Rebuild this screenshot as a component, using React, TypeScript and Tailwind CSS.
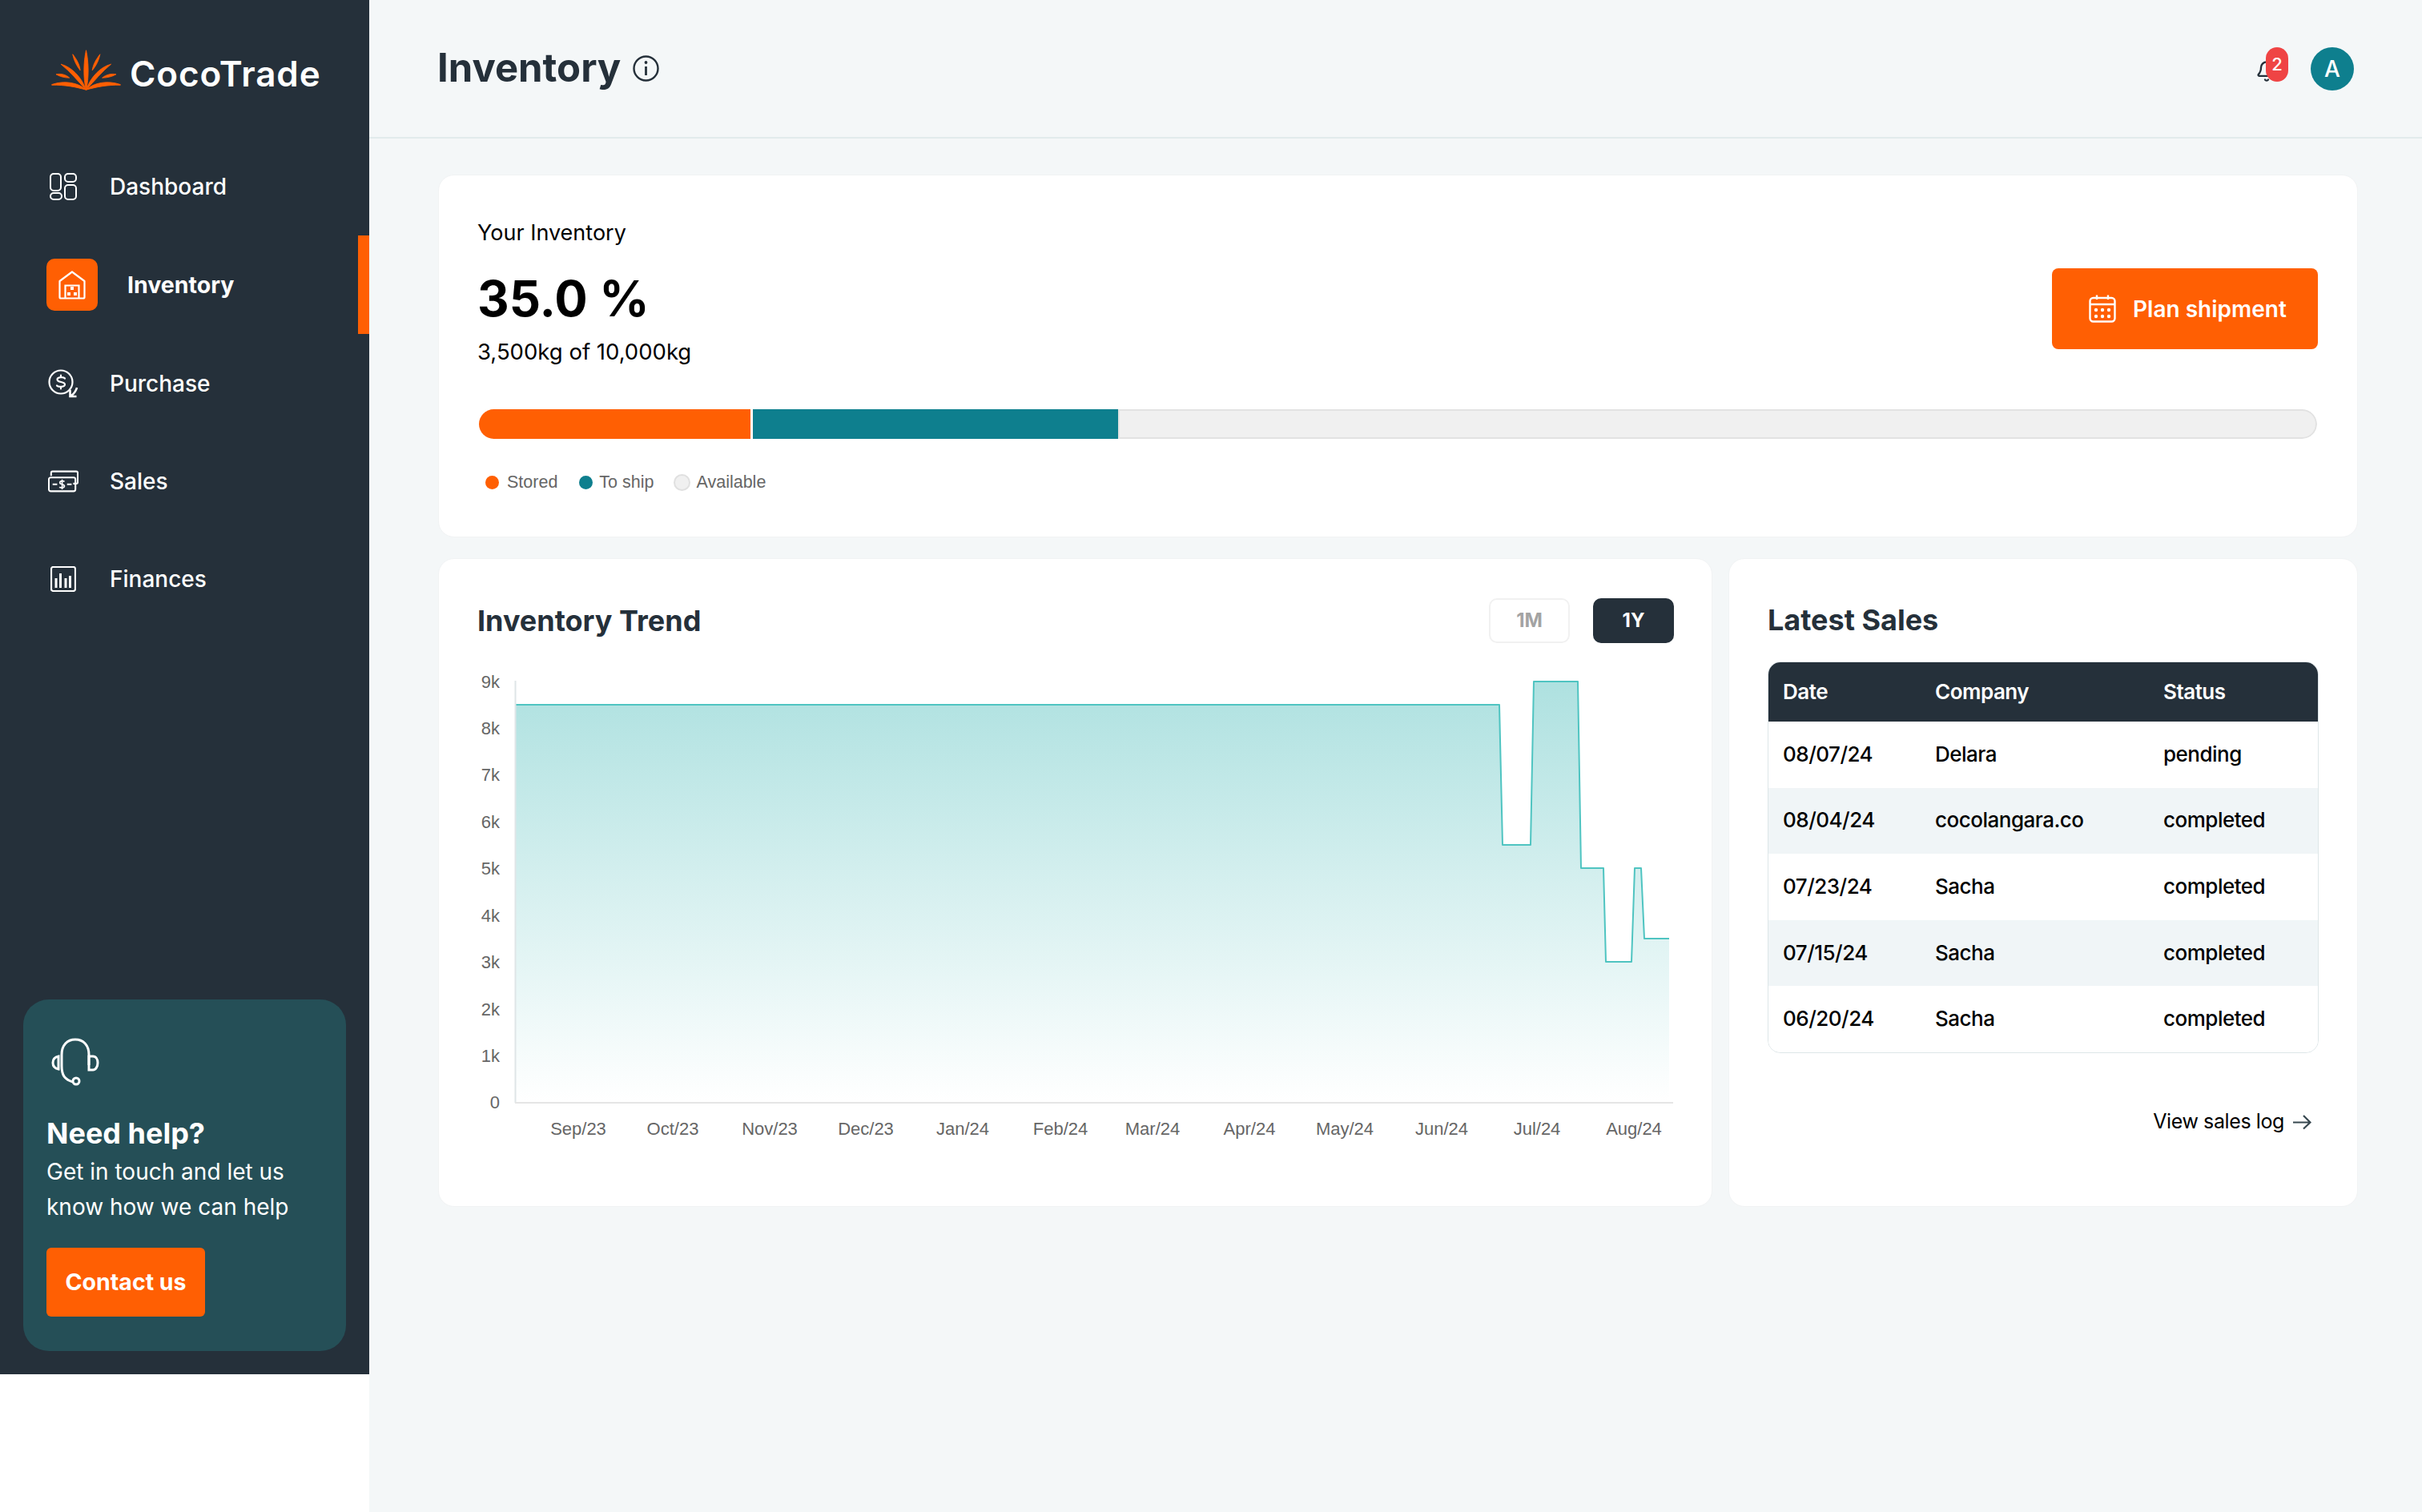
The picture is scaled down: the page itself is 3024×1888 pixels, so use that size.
import { Bell } from "lucide-react";

const I = "font-['Inter',sans-serif]";

function Logo() {
  return (
    <svg width="87" height="51" viewBox="190 183 260 152" fill="#ff5f03" stroke="#ff5f03" strokeWidth="2.5" strokeLinejoin="round" className="shrink-0">
      <path d="M320 333 C309 290 310 230 320 185 C330 230 331 290 320 333Z" />
      <path d="M270 200 C284 218 296 238 298 260 C285 244 274 222 270 200Z" />
      <path d="M372 200 C368 222 357 244 343 260 C346 238 358 218 372 200Z" />
      <path d="M226 237 C264 246 304 285 319 332 C290 300 260 264 226 237Z" />
      <path d="M413 237 C375 246 336 285 321 332 C350 300 380 264 413 237Z" />
      <path d="M208 275 C226 271 246 276 258 288 C240 288 224 284 208 275Z" />
      <path d="M432 275 C414 271 394 276 380 288 C398 288 416 284 432 275Z" />
      <path d="M192 313 C240 296 292 306 320 333 C282 322 240 314 192 315Z" />
      <path d="M448 313 C400 296 348 306 320 333 C358 322 400 314 448 315Z" />
    </svg>
  );
}

function DashIcon() {
  return (
    <svg width="34" height="34" viewBox="0 0 34 34" fill="none" stroke="white" strokeWidth="2">
      <rect x="1" y="1" width="13" height="21" rx="4" />
      <rect x="19" y="1" width="14" height="10" rx="4" />
      <rect x="1" y="25" width="14" height="8" rx="4" />
      <rect x="19" y="15" width="14" height="18" rx="4" />
    </svg>
  );
}

function HouseIcon() {
  return (
    <svg width="34" height="36" viewBox="0 0 34 36" fill="none" stroke="white" strokeWidth="2.2">
      <path d="M1.5 13 L17 1.5 L32.5 13 V33 Q32.5 34.5 31 34.5 H3 Q1.5 34.5 1.5 33Z" strokeLinejoin="round" />
      <path d="M8.5 34 V18.5 H25.5 V34" />
      <g fill="white" stroke="none">
        <rect x="15" y="20" width="4" height="4" />
        <rect x="11" y="27" width="4" height="4" />
        <rect x="19" y="27" width="4" height="4" />
      </g>
    </svg>
  );
}

function PurchaseIcon() {
  return (
    <svg width="38" height="36" viewBox="0 0 38 36" fill="none" stroke="white" strokeWidth="2.2">
      <circle cx="16" cy="16" r="14.5" />
      <path d="M21 11.5 C19.5 9.5 11.5 9.5 11.5 13 C11.5 17 21 15 21 19 C21 22.5 12.5 22.5 11 20.5 M16 7.5 V10 M16 22 V24.5" strokeLinecap="round" />
      <path d="M36 23 C35 27 33 30 29 33 M27.5 26 L27.5 34 L35.5 34" strokeWidth="2.6" />
    </svg>
  );
}

function SalesIcon() {
  return (
    <svg width="40" height="28" viewBox="0 0 40 28" fill="none" stroke="white" strokeWidth="2.2">
      <path d="M4 7 V3 Q4 1 6 1 H37 Q39 1 39 3 V15 Q39 17 37 17 H33" />
      <rect x="1" y="9" width="35" height="18" rx="2.5" />
      <path d="M6 18 H12 M25 18 H31" />
      <path d="M21.5 14.5 C20.5 13 15.5 13 15.5 15.8 C15.5 18.5 21.5 17.5 21.5 20.2 C21.5 22.8 16 22.8 15 21.5 M18.5 11.5 V24.5" strokeWidth="1.8" />
    </svg>
  );
}

function FinanceIcon() {
  return (
    <svg width="32" height="32" viewBox="0 0 32 32" fill="none" stroke="white" strokeWidth="2.2">
      <rect x="1" y="1" width="30" height="30" rx="2.5" />
      <path d="M7 27 V15 M12.5 27 V9 M19 27 V15 M24.5 27 V12" strokeWidth="3" />
    </svg>
  );
}

function HeadsetIcon() {
  return (
    <svg width="60" height="60" viewBox="0 0 60 60" fill="none" stroke="white" strokeWidth="3">
      <path d="M13 35 V21 C13 9 20 2 30 2 C40 2 47 9 47 21 V34" />
      <path d="M13 35 C13 47 17 52 27 55" />
      <path d="M9 23 C4 24 2 27 2 31 C2 35 4 38 9 39Z" />
      <path d="M47 23 H52 C56 23 58 27 58 31 C58 35 56 40 52 40 H47Z" />
      <circle cx="31" cy="54" r="4" />
    </svg>
  );
}

function CalendarIcon() {
  return (
    <svg width="34" height="35" viewBox="0 0 34 35" fill="none" stroke="white" strokeWidth="2.4">
      <rect x="1.5" y="4" width="31" height="29.5" rx="4" />
      <path d="M1.5 12 H32.5 M10 0.5 V6 M24 0.5 V6" />
      <g fill="white" stroke="none">
        <circle cx="9" cy="19" r="2.2" />
        <circle cx="17" cy="19" r="2.2" />
        <circle cx="25" cy="19" r="2.2" />
        <circle cx="9" cy="27" r="2.2" />
        <circle cx="17" cy="27" r="2.2" />
        <circle cx="25" cy="27" r="2.2" />
      </g>
    </svg>
  );
}

function InfoIcon() {
  return (
    <svg width="33" height="33" viewBox="0 0 33 33" fill="none" stroke="#25303a" strokeWidth="2.4">
      <circle cx="16.5" cy="16.5" r="15" />
      <path d="M16.5 14 V25" strokeWidth="2.8" />
      <circle cx="16.5" cy="9" r="1.9" fill="#25303a" stroke="none" />
    </svg>
  );
}

function LongArrow() {
  return (
    <svg width="24" height="20" viewBox="0 0 24 20" fill="none" stroke="#37474f" strokeWidth="2.2">
      <path d="M1 10.5 H22 M14 2 L22.5 10.5 L14 18.5" />
    </svg>
  );
}

const nav = [
  { label: "Dashboard", icon: <DashIcon /> },
  { label: "Inventory", icon: <HouseIcon />, active: true },
  { label: "Purchase", icon: <PurchaseIcon /> },
  { label: "Sales", icon: <SalesIcon /> },
  { label: "Finances", icon: <FinanceIcon /> },
];

function Sidebar() {
  return (
    <aside className="w-[461px] h-[1716px] shrink-0 bg-[#25303a] flex flex-col text-white">
      <div className="h-[172px] pl-[64px] pt-[62px] flex items-start gap-[11px]">
        <Logo />
        <span className="text-[44px] leading-[50px] font-semibold tracking-[0.9px] mt-[5px]">CocoTrade</span>
      </div>
      <nav className="flex flex-col">
        {nav.map((n) =>
          n.active ? (
            <div key={n.label} className="relative h-[123px] flex items-center pl-[58px]">
              <div className="w-[64px] h-[65px] rounded-[10px] bg-[#ff5f03] flex items-center justify-center">{n.icon}</div>
              <span className="ml-[37px] text-[28.5px] font-bold">{n.label}</span>
              <div className="absolute right-0 top-0 w-[14px] h-full bg-[#ff5f03]" />
            </div>
          ) : (
            <div key={n.label} className="h-[122.4px] flex items-center">
              <div className="w-[137px] pl-[60px] flex">
                <div className="w-[38px] flex justify-center">{n.icon}</div>
              </div>
              <span className="text-[28px] font-medium">{n.label}</span>
            </div>
          )
        )}
      </nav>
      <div className="mt-auto mb-[29px] mx-[29px] h-[439px] rounded-[32px] bg-[#254f57] pl-[29px] pt-[48px]">
        <div className="pl-[6px]"><HeadsetIcon /></div>
        <div className="text-[36px] leading-[48px] font-bold mt-[35px]">Need help?</div>
        <div className="text-[28px] leading-[44px] mt-[2px] whitespace-nowrap">Get in touch and let us<br />know how we can help</div>
        <button className="mt-[29px] w-[198px] h-[86px] rounded-[6px] bg-[#ff5f03] text-[28.5px] font-bold">Contact us</button>
      </div>
    </aside>
  );
}

const sales = [
  ["08/07/24", "Delara", "pending"],
  ["08/04/24", "cocolangara.co", "completed"],
  ["07/23/24", "Sacha", "completed"],
  ["07/15/24", "Sacha", "completed"],
  ["06/20/24", "Sacha", "completed"],
];

const yLabels = ["9k", "8k", "7k", "6k", "5k", "4k", "3k", "2k", "1k", "0"];
const xLabels: [string, number][] = [
  ["Sep/23", 722], ["Oct/23", 840], ["Nov/23", 961], ["Dec/23", 1081], ["Jan/24", 1202], ["Feb/24", 1324],
  ["Mar/24", 1439], ["Apr/24", 1560], ["May/24", 1679], ["Jun/24", 1800], ["Jul/24", 1919], ["Aug/24", 2040],
];

const line =
  "M644 880 H1872 L1876 1055 H1911 L1915 851 H1970 L1974 1084 H2002 L2005 1201 H2037 L2041 1084 H2049 L2053 1172 H2084";

function Chart() {
  return (
    <svg width="1590" height="640" viewBox="547 810 1590 640" className="block mt-[7px] -ml-px font-['Liberation_Sans',sans-serif]">
      <defs>
        <linearGradient id="fillArea" x1="0" y1="0" x2="0" y2="1">
          <stop offset="0" stopColor="#aee1e0" />
          <stop offset="1" stopColor="#ffffff" />
        </linearGradient>
      </defs>
      <path d={`${line} V1376 H644 Z`} fill="url(#fillArea)" />
      <path d={line} fill="none" stroke="#4fc4c1" strokeWidth="2" strokeLinejoin="round" />
      <path d="M643.5 850 V1377" stroke="#dfe5e7" strokeWidth="2" fill="none" />
      <path d="M643 1377 H2089" stroke="#e5e5e5" strokeWidth="2" fill="none" />
      {yLabels.map((l, i) => (
        <text key={l} x="624" y={850.5 + i * 58.44 + 8} textAnchor="end" fontSize="22" fill="#666666">{l}</text>
      ))}
      {xLabels.map(([l, x]) => (
        <text key={l} x={x} y="1417" textAnchor="middle" fontSize="22" fill="#666666">{l}</text>
      ))}
    </svg>
  );
}

export default function App() {
  return (
    <div className={`${I} flex w-[3024px] h-[1888px] bg-white overflow-hidden`}>
      <Sidebar />
      <main className="flex-1 h-full bg-[#f4f7f8] text-[#25303a]">
        <header className="h-[173px] border-b-2 border-[#e2ebec] pl-[85px] pr-[85px] flex justify-between items-start">
          <div className="flex items-center gap-[15px] mt-[54px]">
            <h1 className="text-[49px] leading-[62px] font-bold">Inventory</h1>
            <InfoIcon />
          </div>
          <div className="flex items-start gap-[28px] mt-[59px]">
            <div className="relative w-[38px] h-[43px]">
              <Bell size={28} strokeWidth={2} className="absolute left-[-3px] bottom-[-1px]" />
              <div className="absolute right-0 top-0 w-[28px] h-[43px] rounded-[14px] bg-[#ef4444] text-white text-[22px] leading-[43px] text-center font-medium pb-[4px]">2</div>
            </div>
            <div className="w-[54px] h-[54px] rounded-full bg-[#0e7f8e] text-white text-[28px] leading-[54px] text-center font-medium">A</div>
          </div>
        </header>

        <div className="pl-[86px] pr-[80px] pt-[45px] flex flex-col gap-[26px]">
          <section className="h-[453px] rounded-[20px] bg-white border border-[#f1f3f4] px-[48px] pt-[52px]">
            <div className="flex justify-between items-end">
              <div className="text-black">
                <div className="text-[27px] leading-[40px]">Your Inventory</div>
                <div className="text-[61.5px] leading-[80px] font-bold mt-[22px]">35.0 %</div>
                <div className="text-[27.5px] leading-[40px] mt-[6px]">3,500kg of 10,000kg</div>
              </div>
              <button className="mb-[23px] mr-[1px] w-[332px] h-[101px] rounded-[8px] bg-[#ff5f03] text-white flex items-center pl-[46px] gap-[21px] text-[28px] font-semibold">
                <CalendarIcon />
                Plan shipment
              </button>
            </div>
            <div className="mt-[52px] mx-[2px] h-[37px] flex rounded-full overflow-hidden">
              <div className="w-[339px] bg-[#ff5f03] border-r-[3px] border-white box-content" />
              <div className="w-[456px] bg-[#0e7f8e]" />
              <div className="flex-1 bg-[#f0f0f0] border-2 border-[#e2e2e2] rounded-r-full" />
            </div>
            <div className="mt-[39px] flex items-center h-[30px] pl-[10px] font-['Liberation_Sans',sans-serif] text-[21.5px] text-[#666666]">
              <span className="w-[17px] h-[17px] rounded-full bg-[#ff5f03]" />
              <span className="ml-[10px]">Stored</span>
              <span className="ml-[27px] w-[17px] h-[17px] rounded-full bg-[#0e7f8e]" />
              <span className="ml-[8px]">To ship</span>
              <span className="ml-[25px] w-[21px] h-[21px] rounded-full bg-[#f0f0f0] border-2 border-[#e0e0e0]" />
              <span className="ml-[7px]">Available</span>
            </div>
          </section>

          <div className="flex gap-[20px]">
            <section className="w-[1591px] h-[810px] rounded-[20px] bg-white border border-[#f1f3f4]">
              <div className="flex justify-between items-center pl-[48px] pr-[47px] pt-[49px]">
                <h2 className="text-[36px] leading-[56px] font-bold">Inventory Trend</h2>
                <div className="flex gap-[29px]">
                  <button className="w-[101px] h-[56px] rounded-[10px] border-2 border-[#f1f1f1] text-[#a3a3a3] text-[24px] font-bold">1M</button>
                  <button className="w-[101px] h-[56px] rounded-[10px] bg-[#25303a] text-white text-[24px] font-bold">1Y</button>
                </div>
              </div>
              <Chart />
            </section>

            <section className="flex-1 h-[810px] rounded-[20px] bg-white border border-[#f1f3f4] px-[48px] pt-[51px]">
              <h2 className="text-[36px] leading-[50px] font-bold">Latest Sales</h2>
              <div className="mt-[27px] rounded-[16px] overflow-hidden border border-[#dde6e8] text-[26px] tracking-[-0.5px]">
                <div className="h-[74px] pb-[2px] bg-[#25303a] text-white font-semibold grid grid-cols-[190px_285px_1fr] pl-[18px] items-center">
                  <span>Date</span>
                  <span>Company</span>
                  <span>Status</span>
                </div>
                {sales.map((r, i) => (
                  <div key={i} className={`h-[82.6px] pb-[2px] grid grid-cols-[190px_285px_1fr] pl-[18px] items-center font-medium text-black ${i % 2 === 1 ? "bg-[#f0f5f7]" : "bg-white"}`}>
                    <span>{r[0]}</span>
                    <span>{r[1]}</span>
                    <span>{r[2]}</span>
                  </div>
                ))}
              </div>
              <div className="mt-[66px] h-[40px] flex justify-end items-center gap-[10px] pr-[9px] text-[25px] tracking-[-0.4px] text-black">
                View sales log
                <LongArrow />
              </div>
            </section>
          </div>
        </div>
      </main>
    </div>
  );
}
